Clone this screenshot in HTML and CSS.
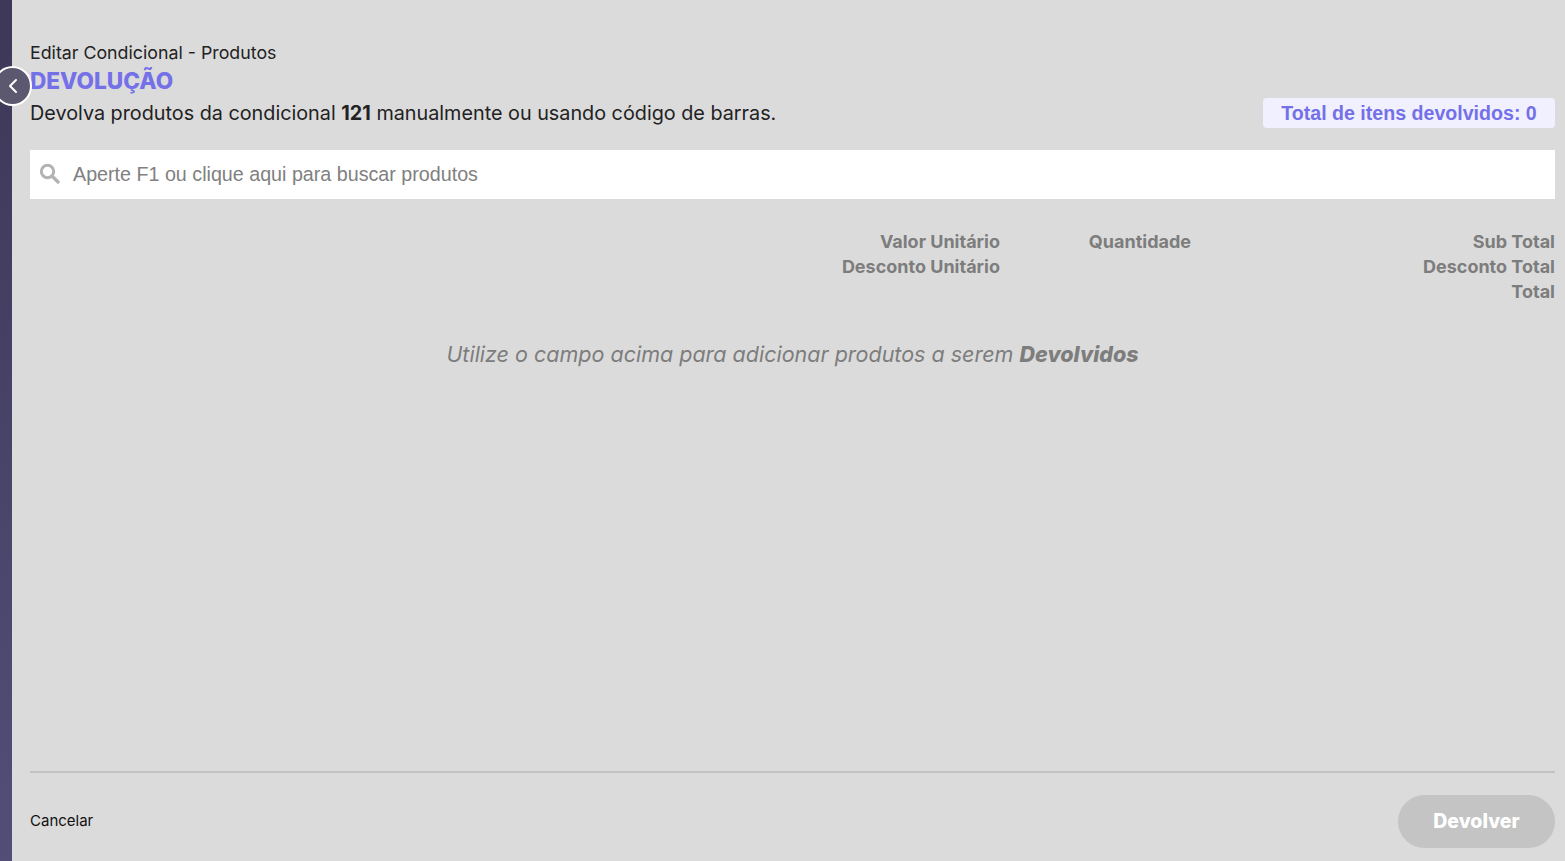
FILE: index.html
```html
<!DOCTYPE html>
<html lang="pt-BR">
<head>
<meta charset="utf-8">
<title>Editar Condicional - Produtos</title>
<link rel="stylesheet" href="styles.css">
</head>
<body>
<div class="app">
  <aside class="rail"></aside>
  <button class="back" aria-label="Voltar">
    <svg width="12" height="16" viewBox="0 0 12 16"><path d="M9 2 3 8l6 6" fill="none" stroke="#fff" stroke-width="2" stroke-linecap="round" stroke-linejoin="round"/></svg>
  </button>
  <main class="main">
    <header class="head">
      <div class="crumb">Editar Condicional - Produtos</div>
      <h1 class="title">DEVOLUÇÃO</h1>
      <div class="subrow">
        <p class="sub">Devolva produtos da condicional <b>121</b> manualmente ou usando código de barras.</p>
        <div class="badge">Total de itens devolvidos: 0</div>
      </div>
    </header>
    <div class="search">
      <svg class="search-icon" width="21" height="21" viewBox="0 0 21 21"><circle cx="8.5" cy="8.5" r="6.2" fill="none" stroke="#b3b3b3" stroke-width="3"/><path d="m13.5 13.5 5.5 5.5" stroke="#b3b3b3" stroke-width="3.4" stroke-linecap="round"/></svg>
      <span class="placeholder">Aperte F1 ou clique aqui para buscar produtos</span>
    </div>
    <div class="cols">
      <div class="col col-unit"><span>Valor Unitário</span><span>Desconto Unitário</span></div>
      <div class="col col-qty"><span>Quantidade</span></div>
      <div class="col col-total"><span>Sub Total</span><span>Desconto Total</span><span>Total</span></div>
    </div>
    <p class="empty">Utilize o campo acima para adicionar produtos a serem <b>Devolvidos</b></p>
    <footer class="foot">
      <a class="cancel">Cancelar</a>
      <button class="submit">Devolver</button>
    </footer>
  </main>
</div>
</body>
</html>
```

FILE: styles.css
```css
* { box-sizing: border-box; }
html, body { margin: 0; height: 100%; }
body { background: #dbdbdb; font-family: Inter, "Open Sans", sans-serif; color: #222; overflow: hidden; }
.app { display: flex; height: 861px; position: relative; }
.rail { width: 12px; flex: none; background: linear-gradient(180deg, #3d3857 0%, #524e78 100%); }
.back { position: absolute; left: -7px; top: 66px; width: 39px; height: 40px; border-radius: 50%; border: 2px solid #fff; background: #5b5870; padding: 0; display: flex; align-items: center; justify-content: center; }
.main { flex: 1; min-width: 0; padding: 42px 10px 13px 18px; display: flex; flex-direction: column; }
.crumb { font-size: 17.8px; line-height: 22px; color: #222; }
.title { margin: 2px 0 0; font-size: 22.6px; line-height: 30px; font-weight: 800; color: #7470e8; }
.subrow { display: flex; align-items: center; justify-content: space-between; height: 30px; margin-top: 2px; }
.sub { margin: 0; font-size: 19.8px; color: #222; }
.sub b { font-weight: 700; }
.badge { width: 292px; height: 30px; text-align: center; border-radius: 4px; background: #f1f0ff; color: #7470e8; font: 700 19.6px/30px "Liberation Sans", sans-serif; }
.search { margin-top: 22px; height: 49px; background: #fff; display: flex; align-items: center; gap: 13px; padding-left: 9px; }
.search-icon { flex: none; margin-top: -2px; }
.placeholder { font: 19.7px "Liberation Sans", sans-serif; color: #808080; }
.cols { display: flex; margin-top: 30px; height: 75px; }
.col { display: flex; flex-direction: column; font-size: 18px; line-height: 25px; font-weight: 700; color: #7d7d7d; }
.col-unit { width: 970px; text-align: right; }
.col-qty { width: 191px; text-align: right; }
.col-total { flex: 1; text-align: right; }
.empty { margin: 35px 0 0; text-align: center; font-size: 21.5px; font-style: italic; color: #7d7d7d; line-height: 30px; }
.empty b { font-weight: 800; }
.foot { margin-top: auto; height: 77px; border-top: 2px solid #c2c2c2; display: flex; align-items: center; justify-content: space-between; padding-top: 21px; }
.cancel { font-size: 15px; color: #111; margin-top: -1px; }
.submit { width: 157px; height: 53px; border: 0; border-radius: 27px; background: #c4c4c4; color: #fff; font: 800 19.5px Inter, sans-serif; }
```
